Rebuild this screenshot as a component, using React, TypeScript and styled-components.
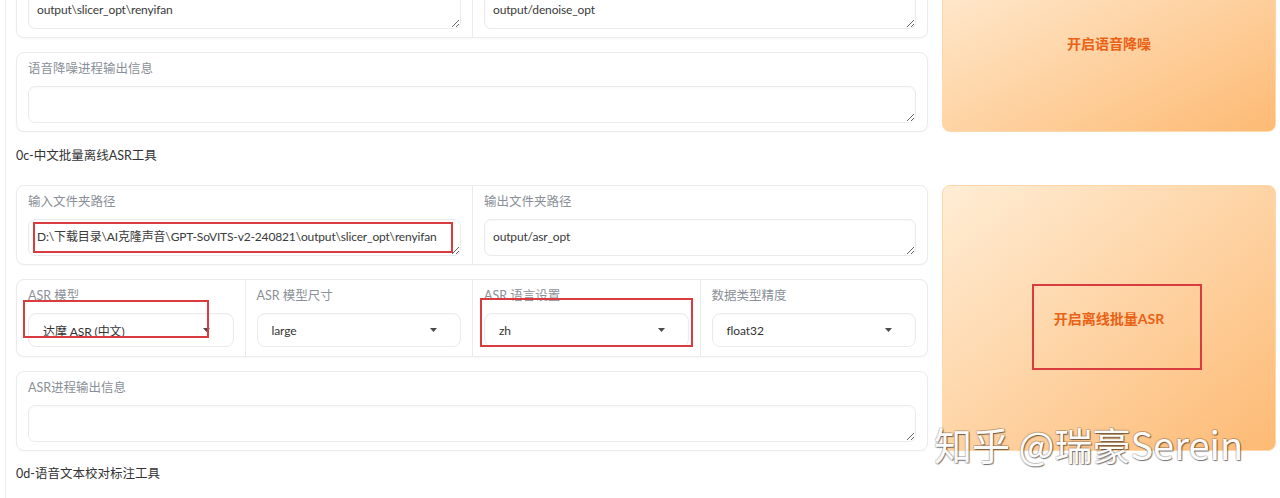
import React from "react";
import styled, { createGlobalStyle } from "styled-components";

const Global = createGlobalStyle`
  html, body { margin: 0; padding: 0; background: #fff; }
  body { font-family: Lato, "Noto Sans CJK SC", sans-serif; -webkit-font-smoothing: antialiased; }
  * { box-sizing: border-box; }
`;

const Page = styled.div`
  position: relative;
  width: 1280px;
  height: 498px;
  overflow: hidden;
  background: #fff;
`;

const Main = styled.div`
  margin: -42px 4px 0 5px;
  border-left: 1px solid #ededed;
  padding-left: 10px;
  display: flex;
  flex-direction: column;
`;

const Row = styled.div`
  display: grid;
  grid-template-columns: 1fr 334px;
  column-gap: 14px;
`;

const LeftCol = styled.div`
  display: flex;
  flex-direction: column;
  gap: 14px;
`;

const Panel = styled.div<{ $cols: number }>`
  display: grid;
  grid-template-columns: repeat(${(p) => p.$cols}, 1fr);
  border: 1px solid #ebebeb;
  border-radius: 8px;
  background: #fff;
  box-shadow: 0 1px 2px rgba(0, 0, 0, 0.03);
  overflow: hidden;
`;

const Field = styled.div<{ $padBottom?: number }>`
  padding: 7px 11px ${(p) => p.$padBottom ?? 8}px 11px;
  min-width: 0;
  & + & {
    border-left: 1px solid #ebebeb;
  }
`;

const Label = styled.span`
  display: block;
  font-size: 12.5px;
  line-height: 18px;
  color: #8b9098;
  margin-bottom: 8px;
  white-space: nowrap;
`;

const TextArea = styled.textarea`
  display: block;
  width: 100%;
  height: 37px;
  margin: 0;
  border: 1px solid #ebebeb;
  border-radius: 7px;
  padding: 7px 8px 9px;
  font-family: Lato, "Noto Sans CJK SC", sans-serif;
  font-size: 12px;
  letter-spacing: -0.15px;
  line-height: 19px;
  color: #3a3a3a;
  background: #fff;
  resize: vertical;
  outline: none;
  overflow: hidden;
  white-space: nowrap;
  box-shadow: inset 0 1px 2px rgba(0, 0, 0, 0.03);
`;

const Select = styled.div`
  display: flex;
  align-items: center;
  justify-content: space-between;
  height: 34px;
  border: 1px solid #ebebeb;
  border-radius: 8px;
  padding: 0 23px 0 14px;
  font-size: 12px;
  letter-spacing: -0.1px;
  color: #333;
  background: #fff;
  box-shadow: inset 0 1px 2px rgba(0, 0, 0, 0.03);
`;

const Arrow = styled.svg`
  width: 7px;
  height: 4px;
  flex: none;
`;

const ActionButton = styled.button<{ $lift?: number }>`
  display: flex;
  align-items: center;
  justify-content: center;
  border: 1px solid #fed7aa;
  border-radius: 8px;
  background: linear-gradient(to bottom right, #ffedd5, #fdba74);
  color: #ea6216;
  font-family: Lato, "Noto Sans CJK SC", sans-serif;
  font-size: 14px;
  font-weight: 700;
  padding: 0 0 ${(p) => p.$lift ?? 0}px;
  cursor: pointer;
`;

const Heading = styled.div<{ $top: number; $bottom: number }>`
  font-size: 12.5px;
  line-height: 20px;
  color: #333;
  padding: ${(p) => p.$top}px 0 ${(p) => p.$bottom}px;
`;

const Mark = styled.div<{ $x: number; $y: number; $w: number; $h: number }>`
  position: absolute;
  left: ${(p) => p.$x}px;
  top: ${(p) => p.$y}px;
  width: ${(p) => p.$w}px;
  height: ${(p) => p.$h}px;
  border: 2px solid #d83c3e;
  pointer-events: none;
`;

const Watermark = styled.div`
  position: absolute;
  left: 934px;
  top: 421px;
  font-family: "Noto Sans CJK SC", sans-serif;
  font-size: 38px;
  line-height: 46px;
  color: #fbfbfb;
  white-space: nowrap;
  pointer-events: none;
  text-shadow: 1px 1px 1px rgba(0, 0, 0, 0.5), -1px -1px 0 rgba(0, 0, 0, 0.14),
    1px -1px 0 rgba(0, 0, 0, 0.14), -1px 1px 0 rgba(0, 0, 0, 0.14);
`;

const Dropdown = ({ value }: { value: string }) => (
  <Select>
    <span>{value}</span>
    <Arrow viewBox="0 0 7 4">
      <path d="M0 0 L7 0 L3.5 4 Z" fill="#4a4a4a" />
    </Arrow>
  </Select>
);

const TextField = ({ label, value }: { label: string; value: string }) => (
  <Field>
    <Label>{label}</Label>
    <TextArea readOnly value={value} rows={1} />
  </Field>
);

export default function App() {
  return (
    <Page>
      <Global />
      <Main>
        <Row>
          <LeftCol>
            <Panel $cols={2}>
              <TextField label="输入文件夹路径" value="output\slicer_opt\renyifan" />
              <TextField label="输出文件夹路径" value="output/denoise_opt" />
            </Panel>
            <Panel $cols={1}>
              <TextField label="语音降噪进程输出信息" value="" />
            </Panel>
          </LeftCol>
          <ActionButton $lift={4}>开启语音降噪</ActionButton>
        </Row>

        <Heading $top={14} $bottom={19}>0c-中文批量离线ASR工具</Heading>

        <Row>
          <LeftCol>
            <Panel $cols={2}>
              <TextField
                label="输入文件夹路径"
                value="D:\下载目录\AI克隆声音\GPT-SoVITS-v2-240821\output\slicer_opt\renyifan"
              />
              <TextField label="输出文件夹路径" value="output/asr_opt" />
            </Panel>
            <Panel $cols={4}>
              <Field $padBottom={9}>
                <Label>ASR 模型</Label>
                <Dropdown value="达摩 ASR (中文)" />
              </Field>
              <Field $padBottom={9}>
                <Label>ASR 模型尺寸</Label>
                <Dropdown value="large" />
              </Field>
              <Field $padBottom={9}>
                <Label>ASR 语言设置</Label>
                <Dropdown value="zh" />
              </Field>
              <Field $padBottom={9}>
                <Label>数据类型精度</Label>
                <Dropdown value="float32" />
              </Field>
            </Panel>
            <Panel $cols={1}>
              <TextField label="ASR进程输出信息" value="" />
            </Panel>
          </LeftCol>
          <ActionButton>开启离线批量ASR</ActionButton>
        </Row>

        <Heading $top={13} $bottom={20}>0d-语音文本校对标注工具</Heading>
      </Main>

      <Mark $x={33} $y={222} $w={420} $h={31} />
      <Mark $x={23} $y={300} $w={186} $h={38} />
      <Mark $x={480} $y={298} $w={213} $h={49} />
      <Mark $x={1032} $y={284} $w={170} $h={86} />

      <Watermark>知乎 @瑞豪Serein</Watermark>
    </Page>
  );
}
